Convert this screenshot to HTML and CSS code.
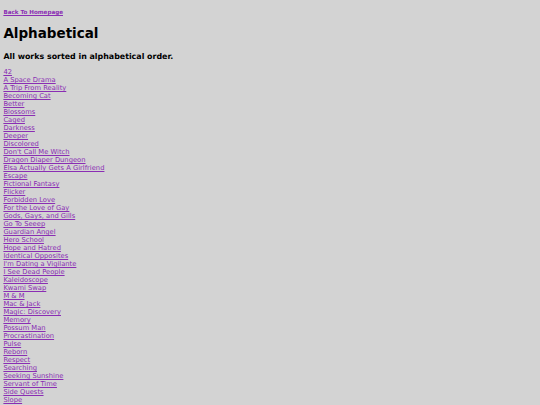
FILE: index.html
```html
<!DOCTYPE html>
<html>
<head>
<meta charset="utf-8">
<link rel="stylesheet" href="styles.css">
</head>
<body>
<h5 class="back"><a href="#">Back To Homepage</a></h5>
<h1 class="title">Alphabetical</h1>
<h3 class="subtitle">All works sorted in alphabetical order.</h3>
<div class="works">
<a href="#">42</a>
<a href="#">A Space Drama</a>
<a href="#">A Trip From Reality</a>
<a href="#">Becoming Cat</a>
<a href="#">Better</a>
<a href="#">Blossoms</a>
<a href="#">Caged</a>
<a href="#">Darkness</a>
<a href="#">Deeper</a>
<a href="#">Discolored</a>
<a href="#">Don't Call Me Witch</a>
<a href="#">Dragon Diaper Dungeon</a>
<a href="#">Elsa Actually Gets A Girlfriend</a>
<a href="#">Escape</a>
<a href="#">Fictional Fantasy</a>
<a href="#">Flicker</a>
<a href="#">Forbidden Love</a>
<a href="#">For the Love of Gay</a>
<a href="#">Gods, Gays, and Gills</a>
<a href="#">Go To Seeep</a>
<a href="#">Guardian Angel</a>
<a href="#">Hero School</a>
<a href="#">Hope and Hatred</a>
<a href="#">Identical Opposites</a>
<a href="#">I'm Dating a Vigilante</a>
<a href="#">I See Dead People</a>
<a href="#">Kaleidoscope</a>
<a href="#">Kwami Swap</a>
<a href="#">M &amp; M</a>
<a href="#">Mac &amp; Jack</a>
<a href="#">Magic: Discovery</a>
<a href="#">Memory</a>
<a href="#">Possum Man</a>
<a href="#">Procrastination</a>
<a href="#">Pulse</a>
<a href="#">Reborn</a>
<a href="#">Respect</a>
<a href="#">Searching</a>
<a href="#">Seeking Sunshine</a>
<a href="#">Servant of Time</a>
<a href="#">Side Quests</a>
<a href="#">Slope</a>
</div>
</body>
</html>
```
FILE: styles.css
```css
html {
  background: #d3d3d3;
}
body {
  margin: 0;
  padding: 0 3.375px;
  font-family: "DejaVu Sans", sans-serif;
  color: #000;
}
a {
  color: #8a2db4;
}
.back {
  margin: 9.35px 0 0;
  font-size: 5.6px;
  font-weight: bold;
}
.title {
  margin: 9.45px 0 0;
  font-size: 13.5px;
  font-weight: bold;
}
.subtitle {
  margin: 11.3px 0 0;
  font-size: 7.9px;
  font-weight: bold;
}
.works {
  margin-top: 6.9px;
}
.works a {
  display: block;
  width: max-content;
  font-size: 6.75px;
  line-height: 8px;
}
```
